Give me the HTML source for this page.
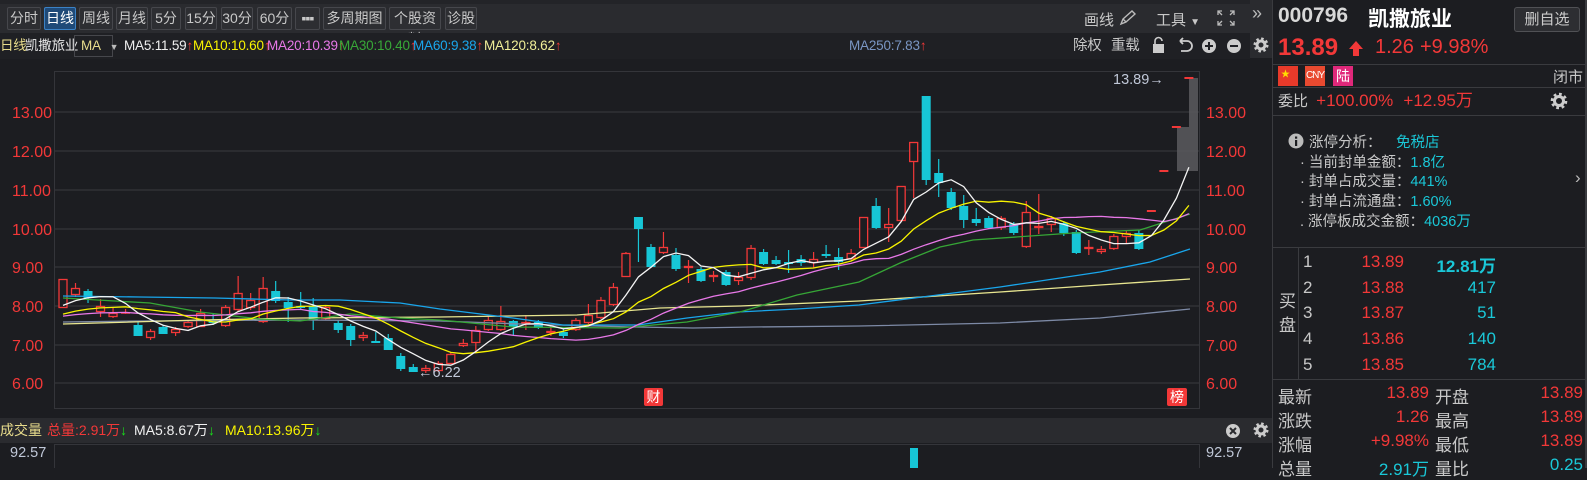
<!DOCTYPE html>
<html><head><meta charset="utf-8">
<style>
*{margin:0;padding:0;box-sizing:border-box}
body{width:1587px;height:468px;overflow:hidden;background:#1c1d21;font-family:"Liberation Sans","Noto Sans CJK SC",sans-serif;color:#c8c8c8;position:relative}
.a{position:absolute;white-space:nowrap}
.tb{position:absolute;left:0;top:0;width:1250px;height:33px;background:#2a2b2f;border-top:4px solid #232428}
.btn{position:absolute;top:7px;height:23px;border:1px solid #46474c;background:#2d2e32;color:#c8c8c8;font-size:14px;line-height:21px;text-align:center;border-radius:2px}
.btn.on{background:#1f4a78;border-color:#3b82c6;color:#fff}
.mar{position:absolute;left:0;top:33px;width:1250px;height:26px;background:#1f2024;font-size:13.5px;line-height:26px;letter-spacing:-0.2px}
.red{color:#f23838}.cy{color:#1ac8d8}
.rp{position:absolute;left:1272px;top:0;width:315px;height:468px;border-left:1px solid #3a3b3f;border-right:2px solid #3a3b3f}
.hl{position:absolute;left:0;width:313px;height:1px;background:#3a3b3f}
</style></head><body>
<div class="tb"></div>
<div class="btn" style="left:7px;width:34px">分时</div>
<div class="btn on" style="left:44px;width:32px">日线</div>
<div class="btn" style="left:79px;width:34px">周线</div>
<div class="btn" style="left:116px;width:32px">月线</div>
<div class="btn" style="left:151px;width:30px">5分</div>
<div class="btn" style="left:185px;width:32px">15分</div>
<div class="btn" style="left:221px;width:32px">30分</div>
<div class="btn" style="left:257px;width:35px">60分</div>
<div class="btn" style="left:295px;width:25px;font-weight:bold;letter-spacing:-1px">▪▪▪</div>
<div class="btn" style="left:323px;width:63px">多周期图 <span style="font-size:10px">▼</span></div>
<div class="btn" style="left:389px;width:52px">个股资料</div>
<div class="btn" style="left:445px;width:32px">诊股</div>
<div class="a" style="left:1084px;top:9px;font-size:15px;color:#c8c8c8">画线</div>
<svg class="a" style="left:1118px;top:9px" width="20" height="18" viewBox="0 0 20 18"><path d="M3 15 L5 10 L14 2 L17 5 L8 13 Z M5 10 L8 13" fill="none" stroke="#bbb" stroke-width="1.4"/></svg>
<div class="a" style="left:1156px;top:9px;font-size:15px">工具 <span style="font-size:10px">▼</span></div>
<svg class="a" style="left:1216px;top:9px" width="20" height="18" viewBox="0 0 20 18"><path d="M2 6V2H6M14 2H18V6M18 12V16H14M6 16H2V12M2 2L6 6M18 2L14 6M18 16L14 12M2 16L6 12" fill="none" stroke="#bbb" stroke-width="1.3"/></svg>

<div class="mar">
<span class="a" style="left:0;color:#e8dc8c">日线</span>
<span class="a" style="left:25px;color:#e8e8e8">凯撒旅业</span>
<span class="a" style="left:74px;top:2px;width:39px;height:22px;border:1px solid #46474c;line-height:20px;padding-left:6px;color:#e8dc8c">MA <span style="font-size:9px;color:#bbb;margin-left:6px">▼</span></span>
<span class="a" style="left:124px;color:#f0f0f0">MA5:11.59<span class="red">↑</span></span>
<span class="a" style="left:193px;color:#f8f400">MA10:10.60<span class="red">↑</span></span>
<span class="a" style="left:267px;color:#e878e8">MA20:10.39<span class="red">↑</span></span>
<span class="a" style="left:339px;color:#38a838">MA30:10.40<span class="red">↑</span></span>
<span class="a" style="left:413px;color:#1aa6ec">MA60:9.38<span class="red">↑</span></span>
<span class="a" style="left:484px;color:#f0ee98">MA120:8.62<span class="red">↑</span></span>
<span class="a" style="left:849px;color:#7a96c4">MA250:7.83<span class="red">↑</span></span>
<span class="a" style="left:1073px;color:#c8c8c8;font-size:14.5px">除权</span>
<span class="a" style="left:1111px;color:#c8c8c8;font-size:14.5px">重载</span>
</div>
<svg class="a" style="left:1150px;top:36px" width="96" height="20" viewBox="0 0 96 20">
<rect x="3" y="8" width="11" height="9" fill="#ccc"/><path d="M5 8V5a3.5 3.5 0 0 1 7 0" fill="none" stroke="#ccc" stroke-width="1.6"/>
<path d="M30 5H37a5 5 0 0 1 0 10H31M30 5l3-3M30 5l3 3" fill="none" stroke="#ccc" stroke-width="1.8"/>
<circle cx="59" cy="10" r="7" fill="#ccc"/><path d="M55 10H63M59 6V14" stroke="#1f2024" stroke-width="2"/>
<circle cx="84" cy="10" r="7" fill="#ccc"/><path d="M80 10H88" stroke="#1f2024" stroke-width="2"/>
</svg>

<svg id="ch" class="a" style="left:0;top:0" width="1250" height="468"></svg>

<div class="a" style="left:0;top:418px;width:1250px;height:25px;background:#2a2b2f;font-size:14px;line-height:25px">
<span class="a" style="left:0;color:#e8dc8c">成交量</span>
<span class="a red" style="left:47px">总量:2.91万<span style="color:#19e019">↓</span></span>
<span class="a" style="left:134px;color:#f0f0f0">MA5:8.67万<span style="color:#19e019">↓</span></span>
<span class="a" style="left:225px;color:#f8f400">MA10:13.96万<span style="color:#19e019">↓</span></span>
</div>
<svg class="a" style="left:1224px;top:422px" width="18" height="18"><circle cx="9" cy="9" r="7" fill="#ccc"/><path d="M6 6L12 12M12 6L6 12" stroke="#2a2b2f" stroke-width="2"/></svg>
<div class="a" style="left:10px;top:445px;font-size:14.5px;color:#c0c8d8">92.57</div>
<div class="a" style="left:1206px;top:445px;font-size:14.5px;color:#c0c8d8">92.57</div>

<div class="a" style="left:1250px;top:0;width:22px;height:33px;background:#2a2b2f"></div>
<div class="a" style="left:1252px;top:3px;font-size:18px;color:#bbb">»</div>
<div class="a" style="left:1250px;top:33px;width:22px;height:25px;background:#2a2b2f"></div>
<svg class="a" style="left:1253px;top:37px" width="16" height="16"><circle cx="8" cy="8" r="4" fill="none" stroke="#ccc" stroke-width="3"/><circle cx="8" cy="8" r="6" fill="none" stroke="#ccc" stroke-width="3" stroke-dasharray="2.4 2.3"/></svg>
<div class="a" style="left:1250px;top:418px;width:22px;height:25px;background:#2a2b2f"></div>
<svg class="a" style="left:1253px;top:422px" width="16" height="16"><circle cx="8" cy="8" r="4" fill="none" stroke="#ccc" stroke-width="3"/><circle cx="8" cy="8" r="6" fill="none" stroke="#ccc" stroke-width="3" stroke-dasharray="2.4 2.3"/></svg>

<div class="rp">
<div class="a" style="left:5px;top:4px;font-size:21px;font-weight:bold;color:#d8d8d8">000796</div>
<div class="a" style="left:95px;top:3px;font-size:21px;font-weight:bold;color:#fff">凯撒旅业</div>
<div class="a" style="left:241px;top:7px;width:66px;height:25px;border:1px solid #505155;background:#2d2e32;border-radius:3px;font-size:15px;line-height:23px;text-align:center;color:#ccc">删自选</div>
<div class="a red" style="left:5px;top:34px;font-size:24px;font-weight:bold">13.89</div>
<svg class="a" style="left:75px;top:40px" width="16" height="17"><path d="M8 1L15 9H11V16H5V9H1Z" fill="#f23838"/></svg>
<div class="a red" style="left:102px;top:36px;font-size:20px">1.26</div>
<div class="a red" style="left:147px;top:36px;font-size:20px">+9.98%</div>
<div class="hl" style="top:64px"></div>
<div class="a" style="left:5px;top:66px;width:20px;height:20px;background:#e83a2a"><span style="position:absolute;left:3px;top:1px;color:#ffde00;font-size:9px">★</span></div>
<div class="a" style="left:32px;top:66px;width:20px;height:20px;background:#e84a30;color:#fff;font-size:10px;line-height:20px;text-align:center;letter-spacing:-1px">CNY</div>
<div class="a" style="left:60px;top:66px;width:20px;height:20px;background:#e0287a;color:#fff;font-size:14px;line-height:20px;text-align:center">陆</div>
<div class="a" style="left:280px;top:66px;font-size:15px;color:#c8c8c8">闭市</div>
<div class="hl" style="top:87px"></div>
<div class="a" style="left:5px;top:89px;height:24px;line-height:24px;font-size:15px;color:#c8c8c8">委比 <span class="red" style="font-size:17px;margin-left:4px">+100.00%</span> <span class="red" style="font-size:17px;margin-left:6px">+12.95万</span></div>
<svg class="a" style="left:277px;top:92px" width="18" height="18"><circle cx="9" cy="9" r="4.5" fill="none" stroke="#ccc" stroke-width="3"/><circle cx="9" cy="9" r="6.8" fill="none" stroke="#ccc" stroke-width="3" stroke-dasharray="2.7 2.6"/></svg>
<div class="hl" style="top:115px"></div>
<svg class="a" style="left:15px;top:133px" width="16" height="16"><circle cx="8" cy="8" r="7.5" fill="#bbb"/><rect x="7" y="7" width="2.2" height="6" fill="#1c1d21"/><rect x="7" y="3.5" width="2.2" height="2.2" fill="#1c1d21"/></svg>
<div class="a" style="left:36px;top:131px;font-size:14.5px">涨停分析：</div>
<div class="a cy" style="left:123px;top:131px;font-size:14.5px">免税店</div>
<div class="a" style="left:27px;top:151px;font-size:14.5px">· 当前封单金额：<span class="cy">1.8亿</span></div>
<div class="a" style="left:27px;top:170px;font-size:14.5px">· 封单占成交量：<span class="cy">441%</span></div>
<div class="a" style="left:27px;top:190px;font-size:14.5px">· 封单占流通盘：<span class="cy">1.60%</span></div>
<div class="a" style="left:27px;top:210px;font-size:14.5px">. 涨停板成交金额：<span class="cy">4036万</span></div>
<div class="a" style="left:302px;top:168px;font-size:17px;color:#bbb">›</div>
<div class="hl" style="top:247px"></div>
<div class="a" style="left:25px;top:247px;width:1px;height:132px;background:#3a3b3f"></div>
<div class="a" style="left:6px;top:290px;font-size:17px;line-height:24px;width:16px;white-space:normal">买盘</div>
<div id="ob"></div>
<div class="hl" style="top:379px"></div>
<div id="qt"></div>
</div>

<script>
const svg=document.getElementById('ch');
let h='';
const R='#f23838',C='#17c6d6',G='#303136';
h+=`<rect x="54.5" y="71.5" width="1145" height="337" fill="none" stroke="#34353a"/>`;
h+=`<rect x="54.5" y="444.5" width="1145" height="40" fill="none" stroke="#34353a"/>`;
const lv=[[13,112],[12,151],[11,190],[10,229],[9,267],[8,306],[7,345],[6,383]];
lv.forEach(([p,y])=>{h+=`<line x1="55" x2="1199" y1="${y}" y2="${y}" stroke="${G}" stroke-width="1.5"/>`;
 h+=`<text x="12" y="${y+6}" fill="${R}" font-size="16" font-family="Liberation Sans">${p}.00</text>`;
 h+=`<text x="1206" y="${y+6}" fill="${R}" font-size="16" font-family="Liberation Sans">${p}.00</text>`;});
h+=`<rect x="1177" y="127" width="21" height="44" fill="#5a5a5e" opacity="0.85"/><rect x="1189" y="78" width="9" height="49" fill="#5a5a5e" opacity="0.85"/>`;
const c=[
[279,308,279,308,'r'],[288,295,283,297,'r'],[291,298,289,303,'c'],[306,312,299,317,'r'],[313,317,308,318,'r'],[312,313,309,314,'r'],
[325,336,322,336,'c'],[331,338,329,340,'r'],[327,334,325,334,'c'],[329,333,327,336,'r'],[322,327,320,328,'r'],[313,327,309,327,'r'],
[321,323,314,325,'c'],[307,326,305,327,'r'],[293,310,276,312,'r'],[300,308,293,310,'r'],[288,322,277,323,'r'],[291,301,281,303,'c'],
[302,308,297,322,'c'],[306,308,292,309,'c'],[306,320,298,330,'c'],[307,319,305,320,'r'],[323,330,320,333,'c'],[326,340,324,346,'c'],
[335,338,332,341,'r'],[341,343,332,343,'c'],[338,350,334,350,'c'],[356,369,353,371,'c'],[367,372,364,372,'c'],[368,371,365,373,'r'],
[363,371,361,372,'r'],[354,364,352,364,'r'],[343,346,339,347,'r'],[330,343,326,353,'r'],[320,330,316,331,'r'],[321,330,306,331,'r'],
[321,327,320,335,'c'],[322,324,315,330,'r'],[322,328,320,329,'c'],[331,333,326,336,'r'],[332,336,329,338,'c'],[320,330,318,331,'r'],
[315,323,304,324,'r'],[300,318,297,319,'r'],[287,305,283,306,'r'],[253,277,252,277,'r'],[217,229,217,262,'c'],[247,267,244,268,'c'],
[247,253,232,254,'r'],[255,269,248,271,'c'],[266,268,260,283,'r'],[269,281,267,282,'c'],[275,277,271,282,'r'],[272,285,270,286,'c'],
[277,281,272,285,'r'],[248,278,245,280,'r'],[252,264,249,265,'c'],[260,264,256,265,'c'],[262,264,250,273,'c'],[259,263,255,266,'c'],
[259,263,252,268,'r'],[254,256,245,258,'c'],[257,262,248,270,'c'],[253,259,249,260,'r'],
[217,248,217,248,'r'],[206,228,198,229,'c'],[224,228,208,242,'r'],[186,221,186,222,'r'],[142,162,142,198,'r'],[96,180,96,185,'c'],
[173,183,159,197,'c'],[192,208,188,210,'c'],[206,220,195,228,'c'],[219,223,208,226,'c'],[218,228,216,229,'c'],[218,228,216,230,'r'],
[224,233,222,235,'c'],[212,247,201,248,'r'],[226,228,194,234,'r'],[218,225,216,232,'r'],[223,233,221,236,'c'],[232,253,230,254,'c'],
[247,249,240,255,'r'],[249,252,246,254,'r'],[236,249,234,250,'r'],[233,237,231,243,'r'],[233,249,230,250,'c'],
[211,211,0,0,'d'],[171,171,0,0,'d'],[127,127,0,0,'d'],[78,78,0,0,'d']];
const X=i=>63+i*12.51;
const cl=[];
c.forEach((k,i)=>{const x=X(i);const [t,b,wt,wb,col]=k;
 if(col==='d'){h+=`<line x1="${x-4.5}" x2="${x+4.5}" y1="${t}" y2="${t}" stroke="${R}" stroke-width="2"/>`;cl.push(t);return;}
 const co=col==='r'?R:C;
 if(wt<t)h+=`<line x1="${x}" x2="${x}" y1="${wt}" y2="${t}" stroke="${co}" stroke-width="1.2"/>`;
 if(wb>b)h+=`<line x1="${x}" x2="${x}" y1="${b}" y2="${wb}" stroke="${co}" stroke-width="1.2"/>`;
 if(b-t<2){h+=`<line x1="${x-4.5}" x2="${x+4.5}" y1="${t+1}" y2="${t+1}" stroke="${co}" stroke-width="1.6"/>`;}
 else if(col==='r')h+=`<rect x="${x-4}" y="${t+0.5}" width="8" height="${b-t-1}" fill="#1c1d21" stroke="${R}" stroke-width="1.3"/>`;
 else h+=`<rect x="${x-4.5}" y="${t}" width="9" height="${b-t}" fill="${C}"/>`;
 cl.push(col==='r'?t:b);
});
function ma(n,pad){const arr=[];for(let i=0;i<cl.length;i++){let s=0;for(let j=i-n+1;j<=i;j++)s+=j<0?pad:cl[j];arr.push(s/n);}return arr;}
function pl(arr,col){return `<polyline fill="none" stroke="${col}" stroke-width="1.3" points="${arr.map((y,i)=>X(i).toFixed(1)+','+y.toFixed(1)).join(' ')}"/>`;}
function pp(pts,col){return `<polyline fill="none" stroke="${col}" stroke-width="1.3" points="${pts.map(p=>p.join(',')).join(' ')}"/>`;}
h+=pp([[63,322],[140,321],[300,320],[440,321],[520,324],[633,327],[693,328],[753,327],[859,326],[1000,323],[1100,318],[1190,309]],'#7d8aa6');
h+=pp([[63,324],[200,320],[300,318],[440,317],[577,315],[660,308],[740,306],[859,301],[1000,292],[1100,285],[1190,279]],'#e8e690');
h+=pp([[63,296],[140,297],[215,298],[290,300],[340,300],[400,303],[440,309],[513,318],[563,325],[638,325],[687,318],[738,312],[797,309],[859,305],[930,296],[1000,287],[1100,272],[1150,262],[1190,249]],'#19a6ec');
h+=pp([[63,298],[150,303],[200,312],[260,319],[300,321],[350,314],[400,318],[440,320],[513,327],[620,328],[687,322],[740,312],[797,295],[859,282],[900,263],[940,247],[973,240],[1073,233],[1140,230],[1190,214]],'#36a636');
h+=pl(ma(20,318),'#e878e8');
h+=pl(ma(10,318),'#f8f400');
h+=pl(ma(5,312),'#f4f4f4');
h+=`<text x="1113" y="84" fill="#c0c8d8" font-size="14.5" font-family="Liberation Sans">13.89→</text>`;
h+=`<text x="418" y="377" fill="#c0c8d8" font-size="14.5" font-family="Liberation Sans">←6.22</text>`;
h+=`<rect x="644" y="388" width="19" height="18" rx="2" fill="#f23838"/><text x="653.5" y="402" fill="#fff" font-size="14" text-anchor="middle" font-family="Noto Sans CJK SC">财</text>`;
h+=`<rect x="1167" y="388" width="20" height="18" rx="2" fill="#f23838"/><text x="1177" y="402" fill="#fff" font-size="14" text-anchor="middle" font-family="Noto Sans CJK SC">榜</text>`;
h+=`<rect x="910" y="448" width="8" height="20" fill="${C}"/>`;
svg.innerHTML=h;
const ob=[['1','13.89','12.81万',1],['2','13.88','417'],['3','13.87','51'],['4','13.86','140'],['5','13.85','784']];
let o='';ob.forEach((r,i)=>{const t=252+i*25.7;
 o+=`<div class="a" style="left:30px;top:${t}px;font-size:17px;color:#c8c8c8">${r[0]}</div>`;
 o+=`<div class="a red" style="left:60px;width:71px;text-align:right;top:${t}px;font-size:17px">${r[1]}</div>`;
 o+=`<div class="a cy" style="left:140px;width:83px;text-align:right;top:${t}px;font-size:17px;${r[3]?'font-weight:bold':''}">${r[2]}</div>`;});
document.getElementById('ob').innerHTML=o;
const q=[['最新','13.89','开盘','13.89'],['涨跌','1.26','最高','13.89'],['涨幅','+9.98%','最低','13.89'],['总量','2.91万','量比','0.25']];
let s='';q.forEach((r,i)=>{const t=383+i*24;
 s+=`<div class="a" style="left:5px;top:${t}px;font-size:17px">${r[0]}</div>`;
 s+=`<div class="a ${i==3?'cy':'red'}" style="left:60px;width:96px;text-align:right;top:${t}px;font-size:17px">${r[1]}</div>`;
 s+=`<div class="a" style="left:162px;top:${t}px;font-size:17px">${r[2]}</div>`;
 s+=`<div class="a ${i==3?'cy':'red'}" style="left:220px;width:90px;text-align:right;top:${t}px;font-size:17px">${r[3]}</div>`;});
document.getElementById('qt').innerHTML=s;
</script>
</body></html>
